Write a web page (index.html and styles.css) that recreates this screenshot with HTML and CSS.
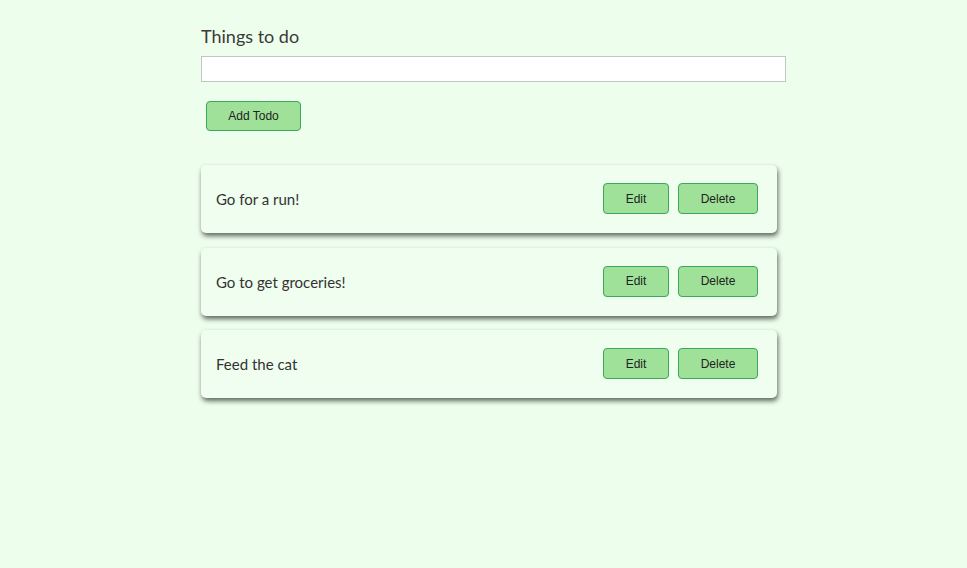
FILE: index.html
```html
<!DOCTYPE html>
<html>
<head>
<meta charset="utf-8">
<link rel="stylesheet" href="styles.css">
</head>
<body>
<div class="app">
  <h1 class="title">Things to do</h1>
  <input class="todo-input" type="text">
  <div class="add-row"><button class="btn add-btn">Add Todo</button></div>
  <ul class="list">
    <li class="card"><span class="text">Go for a run!</span><div class="actions"><button class="btn edit">Edit</button><button class="btn delete">Delete</button></div></li>
    <li class="card"><span class="text">Go to get groceries!</span><div class="actions"><button class="btn edit">Edit</button><button class="btn delete">Delete</button></div></li>
    <li class="card"><span class="text">Feed the cat</span><div class="actions"><button class="btn edit">Edit</button><button class="btn delete">Delete</button></div></li>
  </ul>
</div>
</body>
</html>
```
FILE: styles.css
```css
html, body {
  margin: 0;
  padding: 0;
  background: #edfeec;
}
body {
  font-family: "Lato", "Open Sans", sans-serif;
  color: #333;
}
.app {
  width: 585px;
  margin: 0 auto;
  padding: 25px 0 60px;
  position: relative;
  left: 10px;
}
.title {
  margin: 0;
  font-size: 18px;
  font-weight: 400;
  line-height: 22px;
  color: #3a3a3a;
}
.todo-input {
  display: block;
  box-sizing: border-box;
  width: 585px;
  height: 26px;
  margin-top: 9px;
  border: 1px solid #c4c4c4;
  background: #fff;
  padding: 0 6px;
}
.add-row {
  padding: 19px 0 0 5px;
}
.btn {
  font-family: "Liberation Sans", Arial, sans-serif;
  font-size: 12px;
  color: #222;
  background: #a0e19a;
  border: 1px solid #3aa85d;
  border-radius: 4px;
  cursor: pointer;
  padding: 0;
}
.add-btn {
  width: 95px;
  height: 30px;
}
.list {
  list-style: none;
  margin: 34px 0 0 0;
  padding: 0 0 20px;
  display: flex;
  flex-direction: column;
  gap: 14.5px;
}
.card {
  width: 576px;
  height: 68px;
  box-sizing: border-box;
  background: #effeef;
  border-radius: 5px;
  box-shadow: 1px 3px 5px rgba(0, 0, 0, 0.6);
  display: flex;
  align-items: center;
  justify-content: space-between;
  padding: 0 19px 1px 15px;
}
.text {
  font-size: 15px;
  color: #333;
  padding-top: 1px;
}
.actions {
  display: flex;
  gap: 9px;
}
.edit {
  width: 66px;
  height: 31px;
}
.delete {
  width: 80px;
  height: 31px;
}
```
